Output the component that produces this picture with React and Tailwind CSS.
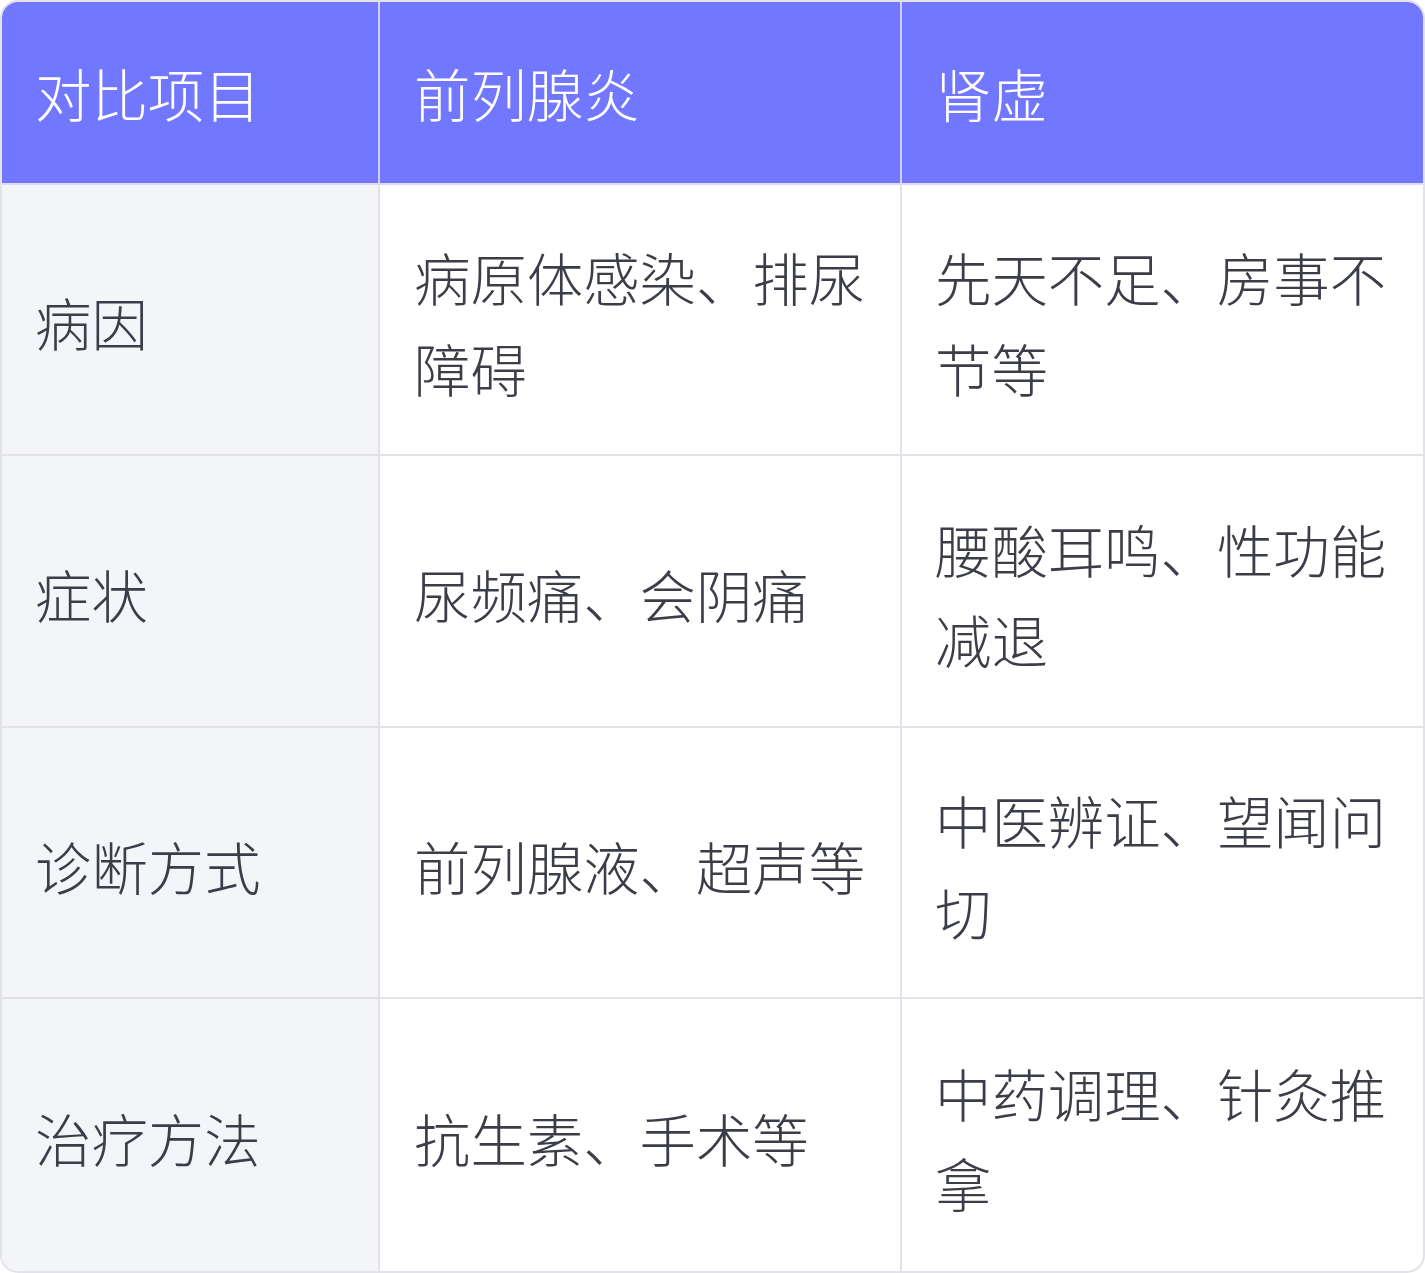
import React from "react";

const rows = [
  ["病因", "病原体感染、排尿障碍", "先天不足、房事不节等"],
  ["症状", "尿频痛、会阴痛", "腰酸耳鸣、性功能减退"],
  ["诊断方式", "前列腺液、超声等", "中医辨证、望闻问切"],
  ["治疗方法", "抗生素、手术等", "中药调理、针灸推拿"],
];

const font = { fontFamily: '"Noto Sans CJK SC", "Noto Sans", sans-serif' };

export default function App() {
  return (
    <div className="w-[1425px] h-[1273px] bg-white" style={font}>
      <div className="w-full h-full border-2 border-[#e2e2e8] rounded-[18px] overflow-hidden flex flex-col text-[56.4px] leading-[1.6] font-light">
        <div className="flex h-[183px] bg-[#7177ff] text-white border-b-2 border-[#dcdcec]">
          <div className="w-[378px] shrink-0 border-r-2 border-[#cfd1f7] flex items-center pl-[33px] pr-[20px] pt-[2px]">对比项目</div>
          <div className="w-[522px] shrink-0 border-r-2 border-[#cfd1f7] flex items-center pl-[34px] pr-[20px] pt-[2px]">前列腺炎</div>
          <div className="flex-1 flex items-center pl-[33px] pr-[20px] pt-[2px]">肾虚</div>
        </div>
        {rows.map((r, i) => (
          <div
            key={i}
            className={`flex h-[272px] text-[#3b3d48] ${i < rows.length - 1 ? "border-b-2 border-[#e2e2e8]" : ""}`}
          >
            <div className="w-[378px] shrink-0 bg-[#f4f5f9] border-r-2 border-[#e2e2e8] flex items-center pl-[33px] pr-[20px] pt-[6px]">
              {r[0]}
            </div>
            <div className="w-[522px] shrink-0 border-r-2 border-[#e2e2e8] flex items-center pl-[34px] pr-[28px] pt-[6px]">
              <span>{r[1]}</span>
            </div>
            <div className="flex-1 flex items-center pl-[33px] pr-[28px] pt-[6px]">
              <span>{r[2]}</span>
            </div>
          </div>
        ))}
      </div>
    </div>
  );
}
